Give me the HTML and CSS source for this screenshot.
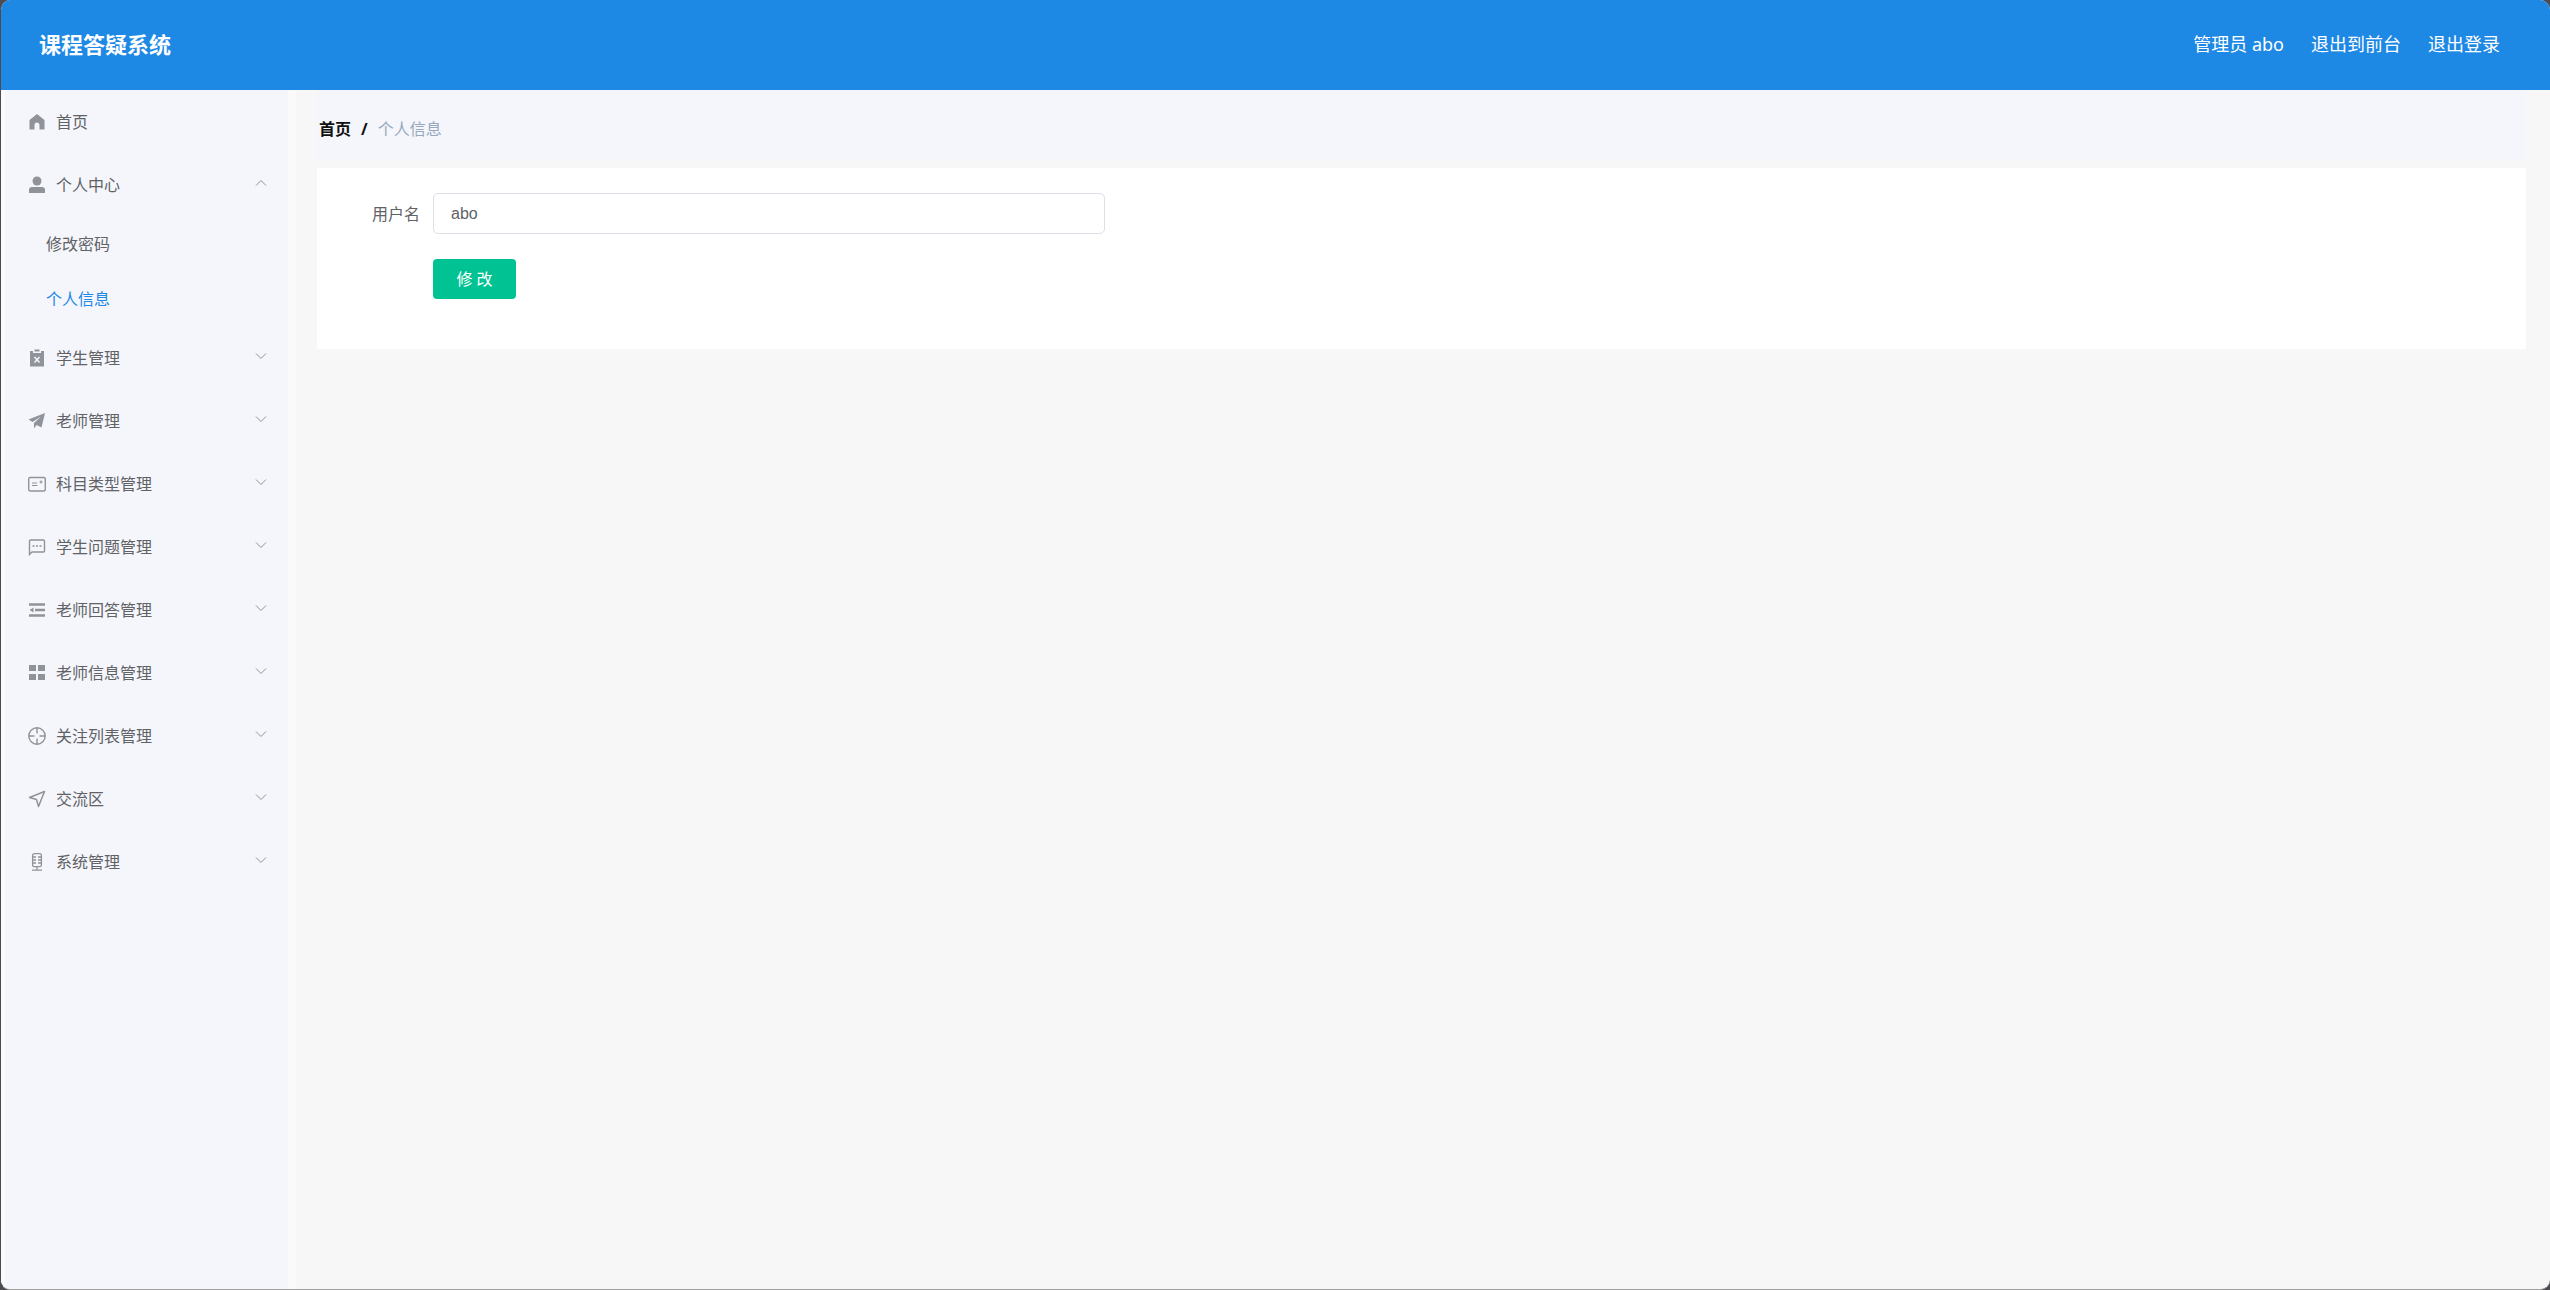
FILE: index.html
```html
<!DOCTYPE html>
<html lang="zh-CN">
<head>
    <meta charset="UTF-8">
    <meta name="viewport" content="width=device-width, initial-scale=1.0">
    <title>课程答疑系统</title>
    <link rel="stylesheet" href="styles.css">
</head>
<body>
    <svg width="0" height="0" class="sprite" aria-hidden="true">
        <symbol id="arrow-down" viewBox="0 0 12 8"><path d="M1 1.5 6 6.5 11 1.5" fill="none" stroke="currentColor"/></symbol>
    </svg>

    <div class="window">
        <header class="header">
            <h1 class="title">课程答疑系统</h1>
            <nav class="user-nav">
                <span>管理员 abo</span>
                <a href="#">退出到前台</a>
                <a href="#">退出登录</a>
            </nav>
        </header>

        <div class="layout">
            <aside class="sidebar">
                <ul class="menu">
                    <li>
                        <a href="#" class="menu-item">
                            <svg class="icon" viewBox="0 0 18 18"><path d="M9 1 1.5 7V16.5H6.5V12a2.5 2.5 0 0 1 5 0V16.5H16.5V7Z" fill="currentColor"/></svg>
                            <span>首页</span>
                        </a>
                    </li>
                    <li>
                        <button type="button" class="menu-item" aria-expanded="true">
                            <svg class="icon" viewBox="0 0 18 18"><circle cx="9" cy="5" r="4.5" fill="currentColor"/><path d="M1 17v-3q0-3 3-3h10q3 0 3 3v3Z" fill="currentColor"/></svg>
                            <span>个人中心</span>
                            <svg class="arrow open"><use href="#arrow-down"/></svg>
                        </button>
                        <ul class="submenu">
                            <li><a href="#">修改密码</a></li>
                            <li><a href="#" class="active">个人信息</a></li>
                        </ul>
                    </li>
                    <li>
                        <button type="button" class="menu-item">
                            <svg class="icon" viewBox="0 0 18 18"><path d="M2 2h3v2h8V2h3v15.5H2Z" fill="currentColor"/><path d="M6.5 .5h5v2h-5Z" fill="currentColor"/><path d="m6.5 8 5 5.5M11.5 8l-5 5.5" stroke="#f5f6fb" stroke-width="1.5"/></svg>
                            <span>学生管理</span>
                            <svg class="arrow"><use href="#arrow-down"/></svg>
                        </button>
                    </li>
                    <li>
                        <button type="button" class="menu-item">
                            <svg class="icon" viewBox="0 0 18 18"><path d="M17 1 .5 7.5 4.5 10 13 4.5 6 11v5.5L8.5 13l5 2.5Z" fill="currentColor"/></svg>
                            <span>老师管理</span>
                            <svg class="arrow"><use href="#arrow-down"/></svg>
                        </button>
                    </li>
                    <li>
                        <button type="button" class="menu-item">
                            <svg class="icon" viewBox="0 0 18 18" fill="none" stroke="currentColor"><rect x=".7" y="2.5" width="16.6" height="13.5" rx="1.5" stroke-width="1.4"/><path d="M4 8h5M4 10.5h5.5M11.5 7h3M13 5.5v3" stroke-width="1.2"/></svg>
                            <span>科目类型管理</span>
                            <svg class="arrow"><use href="#arrow-down"/></svg>
                        </button>
                    </li>
                    <li>
                        <button type="button" class="menu-item">
                            <svg class="icon" viewBox="0 0 18 18"><path d="M1.5 16.5V3q0-1 1-1h13q1 0 1 1v10q0 1-1 1H4Z" fill="none" stroke="currentColor" stroke-width="1.4"/><path d="M4.5 7.2h2v1.6h-2ZM8 7.2h2v1.6H8ZM11.5 7.2h2v1.6h-2Z" fill="currentColor"/></svg>
                            <span>学生问题管理</span>
                            <svg class="arrow"><use href="#arrow-down"/></svg>
                        </button>
                    </li>
                    <li>
                        <button type="button" class="menu-item">
                            <svg class="icon" viewBox="0 0 18 18"><path d="M1 3.5h16M7 9h10M1 14.5h16" stroke="currentColor" stroke-width="2.6"/><path d="M1.5 9 5.5 6.5v5Z" fill="currentColor"/></svg>
                            <span>老师回答管理</span>
                            <svg class="arrow"><use href="#arrow-down"/></svg>
                        </button>
                    </li>
                    <li>
                        <button type="button" class="menu-item">
                            <svg class="icon" viewBox="0 0 18 18"><path d="M1 1h7v6H1ZM10 1h7v6h-7ZM1 10h7v6H1ZM10 10h7v6h-7Z" fill="currentColor"/></svg>
                            <span>老师信息管理</span>
                            <svg class="arrow"><use href="#arrow-down"/></svg>
                        </button>
                    </li>
                    <li>
                        <button type="button" class="menu-item">
                            <svg class="icon" viewBox="0 0 18 18" fill="none" stroke="currentColor" stroke-width="1.4"><circle cx="9" cy="9" r="8.2"/><path d="M9 1v5.5M9 11.5V17M1 9h5.5M11.5 9H17"/></svg>
                            <span>关注列表管理</span>
                            <svg class="arrow"><use href="#arrow-down"/></svg>
                        </button>
                    </li>
                    <li>
                        <button type="button" class="menu-item">
                            <svg class="icon" viewBox="0 0 18 18"><path d="M16.5 1.5 1.5 7.5 8.5 9.5 10.5 16.5Z" fill="none" stroke="currentColor" stroke-width="1.5" stroke-linejoin="round"/></svg>
                            <span>交流区</span>
                            <svg class="arrow"><use href="#arrow-down"/></svg>
                        </button>
                    </li>
                    <li>
                        <button type="button" class="menu-item">
                            <svg class="icon" viewBox="0 0 18 18" fill="none" stroke="currentColor" stroke-width="1.3"><rect x="4.6" y=".7" width="8.8" height="13" rx="1.8"/><path d="M9 13.5v3.5M4 17.2h10M5 4h3M10 4h3M5 7h3M10 7h3M5 10h3M10 10h3"/></svg>
                            <span>系统管理</span>
                            <svg class="arrow"><use href="#arrow-down"/></svg>
                        </button>
                    </li>
                </ul>
            </aside>

            <main class="main">
                <nav class="breadcrumb">
                    <a href="#">首页</a>
                    <span class="separator">/</span>
                    <span class="current">个人信息</span>
                </nav>
                <form class="card">
                    <div class="form-item">
                        <label for="username">用户名</label>
                        <input type="text" id="username" name="username" value="abo">
                    </div>
                    <div class="form-item">
                        <button type="button" class="btn">修 改</button>
                    </div>
                </form>
            </main>
        </div>
    </div>
</body>
</html>
```

FILE: styles.css
```css
* { box-sizing: border-box; }
body { margin: 0; background: #4d4b50; color: #606266; font: 16px/24px "Noto Sans", "Noto Sans CJK SC", sans-serif; }
a { color: inherit; text-decoration: none; }
ul { list-style: none; margin: 0; padding: 0; }
button, input { font: inherit; color: inherit; }
.sprite { position: absolute; }

.window { display: flex; flex-direction: column; min-height: 100vh; border-left: 1px solid #4d4b50; border-bottom: 1px solid #a0a0a0; border-radius: 10px; overflow: hidden; background: #f7f7f7; }

.header { display: flex; align-items: center; justify-content: space-between; height: 90px; padding: 0 50px 2px 38px; background: #1e88e5; color: #fff; }
.title { margin: 0; font-size: 22px; line-height: 32px; font-weight: 700; }
.user-nav { display: flex; gap: 27px; font-size: 18px; }

.layout { display: flex; flex: 1; }
.sidebar { flex: none; width: 295px; border-left: 4px solid #fafafd; border-right: 8px solid #fafafa; background: #f5f6fb; }
.menu-item { display: flex; align-items: center; width: 100%; height: 63px; padding: 0 21px 0 23px; border: none; background: none; text-align: left; cursor: pointer; }
.icon { flex: none; width: 18px; height: 18px; margin-right: 10px; color: #909399; }
.arrow { width: 12px; height: 8px; margin: 0 0 4px auto; color: #909399; }
.arrow.open { transform: rotate(180deg); }
.submenu a { display: flex; align-items: center; height: 55px; padding-left: 41px; }
.submenu .active { color: #1e88e5; }

.main { flex: 1; padding: 0 24px 0 21px; }
.breadcrumb { display: flex; align-items: center; gap: 10px; height: 70px; padding: 8px 0 0 2px; margin-bottom: 8px; background: #f5f6fb; }
.breadcrumb a, .separator { color: #111; font-weight: 700; }
.current { color: #97a8be; }

.card { padding: 25px 20px; background: #fff; }
.form-item { display: flex; align-items: center; max-width: 768px; margin-bottom: 25px; }
.form-item label { flex: none; width: 96px; padding-right: 13px; text-align: right; }
.form-item input { flex: 1; min-width: 0; height: 41px; padding: 0 17px; border: 1px solid #dcdfe6; border-radius: 5px; background: #fff; font-family: "Liberation Sans", sans-serif; }
.btn { width: 83px; height: 40px; margin-left: 96px; padding: 0; border: none; border-radius: 4px; background: #00c292; color: #fff; cursor: pointer; }
```
